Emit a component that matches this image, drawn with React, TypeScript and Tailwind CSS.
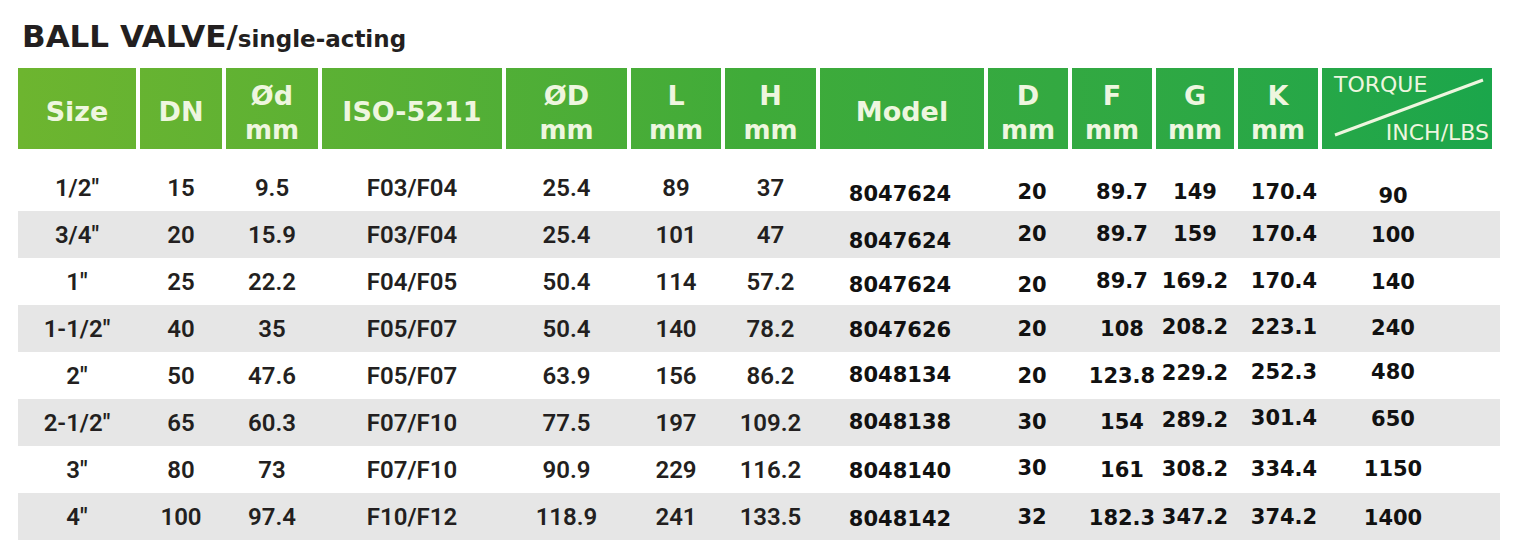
import React from 'react';

// column widths shared by header and body (header cells carry a 4px white left border)
const COLS = [
  'w-[118px]',
  'w-[86px]',
  'w-[96px]',
  'w-[184px]',
  'w-[125px]',
  'w-[94px]',
  'w-[95px]',
  'w-[168px]',
  'w-[84px]',
  'w-[84px]',
  'w-[82px]',
  'w-[84px]',
  'w-[174px]',
];

// horizontal nudges for the right-hand block
const SHIFT = ['', '', '', '', '', '', '', '', 'pl-[12px]', 'pl-[24px]', 'pl-[4px]', 'pl-[16px]', 'pr-[24px]'];

const HEAD: [string, string?][] = [
  ['Size'],
  ['DN'],
  ['Ød', 'mm'],
  ['ISO-5211'],
  ['ØD', 'mm'],
  ['L', 'mm'],
  ['H', 'mm'],
  ['Model'],
  ['D', 'mm'],
  ['F', 'mm'],
  ['G', 'mm'],
  ['K', 'mm'],
];

const DY: Record<number, string> = {
  [-4]: 'pb-[8px]',
  [-3]: 'pb-[6px]',
  [-2]: 'pb-[4px]',
  [-1]: 'pb-[2px]',
  0: '',
  1: 'pt-[2px]',
  2: 'pt-[4px]',
  3: 'pt-[6px]',
  4: 'pt-[8px]',
  5: 'pt-[10px]',
  7: 'pt-[14px]',
  9: 'pt-[18px]',
};

const ROWS: { left: string[]; right: string[]; dy: number[] }[] = [
  { left: ['1/2"', '15', '9.5', 'F03/F04', '25.4', '89', '37'], right: ['8047624', '20', '89.7', '149', '170.4', '90'], dy: [7, 5, 5, 5, 5, 9] },
  { left: ['3/4"', '20', '15.9', 'F03/F04', '25.4', '101', '47'], right: ['8047624', '20', '89.7', '159', '170.4', '100'], dy: [7, 0, 0, 0, 0, 1] },
  { left: ['1"', '25', '22.2', 'F04/F05', '50.4', '114', '57.2'], right: ['8047624', '20', '89.7', '169.2', '170.4', '140'], dy: [4, 4, 0, 0, 0, 1] },
  { left: ['1-1/2"', '40', '35', 'F05/F07', '50.4', '140', '78.2'], right: ['8047626', '20', '108', '208.2', '223.1', '240'], dy: [2, 1, 1, -1, -1, 0] },
  { left: ['2"', '50', '47.6', 'F05/F07', '63.9', '156', '86.2'], right: ['8048134', '20', '123.8', '229.2', '252.3', '480'], dy: [0, 1, 1, -2, -3, -3] },
  { left: ['2-1/2"', '65', '60.3', 'F07/F10', '77.5', '197', '109.2'], right: ['8048138', '30', '154', '289.2', '301.4', '650'], dy: [0, 0, 0, -2, -4, -3] },
  { left: ['3"', '80', '73', 'F07/F10', '90.9', '229', '116.2'], right: ['8048140', '30', '161', '308.2', '334.4', '1150'], dy: [2, -1, 1, 0, 0, 0] },
  { left: ['4"', '100', '97.4', 'F10/F12', '118.9', '241', '133.5'], right: ['8048142', '32', '182.3', '347.2', '374.2', '1400'], dy: [3, 1, 2, 1, 1, 2] },
];

const headFont = { fontFamily: '"DejaVu Sans", Verdana, sans-serif' };

function HeadCell({ i, top, bottom }: { i: number; top: string; bottom?: string }) {
  return (
    <div
      className={`${COLS[i]} ${i > 0 ? 'border-l-4 border-white' : ''} flex flex-col items-center ${
        bottom ? 'pt-[11px]' : 'justify-center pt-[7px]'
      } text-[27px] font-bold leading-[34px] text-[#eef6df]`}
    >
      <span>{top}</span>
      {bottom && <span className="text-[26px]">{bottom}</span>}
    </div>
  );
}

function TorqueCell() {
  return (
    <div className={`${COLS[12]} relative flex flex-col justify-between border-l-4 border-white pt-[6px] pb-[6px] pl-[12px] pr-[3px] text-[22px] leading-[21px] text-[#eef6df]`}>
      <svg className="absolute inset-0 h-full w-full" viewBox="0 0 170 81" preserveAspectRatio="none">
        <line x1="13" y1="67" x2="161" y2="12" stroke="#eef6df" strokeWidth="3" />
      </svg>
      <span className="self-start">TORQUE</span>
      <span className="self-end">INCH/LBS</span>
    </div>
  );
}

export default function App() {
  return (
    <div className="h-[551px] w-[1529px] overflow-hidden bg-white pl-[18px] pt-[21px]">
      <div className="flex items-baseline pl-[4px] text-[#231f20]" style={headFont}>
        <span className="text-[31px] font-bold leading-[30px]">BALL VALVE/</span>
        <span className="text-[23px] font-bold leading-[30px]">single-acting</span>
      </div>

      <div className="mt-[14px] flex h-[81px] w-[1474px] bg-linear-to-r from-[#6db52f] via-[#3fab39] to-[#1ba64b]" style={headFont}>
        {HEAD.map(([t, b], i) => (
          <HeadCell key={i} i={i} top={t} bottom={b} />
        ))}
        <TorqueCell />
      </div>

      <div className="mt-[15px] w-[1482px]">
        {ROWS.map((r, ri) => (
          <div key={ri} className={`flex h-[47px] ${ri % 2 === 1 ? 'bg-[#e6e6e6]' : 'bg-white'}`}>
            {r.left.map((v, ci) => (
              <div
                key={ci}
                className={`${COLS[ci]} flex items-center justify-center pt-[1px] ${ci > 0 ? 'pl-[4px]' : ''} text-[24px] font-semibold text-[#231f20]`}
                style={{ fontFamily: 'Roboto, "Liberation Sans", sans-serif' }}
              >
                {v}
              </div>
            ))}
            {r.right.map((v, k) => {
              const ci = k + 7;
              return (
                <div
                  key={ci}
                  className={`${COLS[ci]} ${SHIFT[ci]} ${DY[r.dy[k]]} flex items-center justify-center text-[21px] font-bold text-[#111111]`}
                  style={headFont}
                >
                  {v}
                </div>
              );
            })}
          </div>
        ))}
      </div>
    </div>
  );
}
